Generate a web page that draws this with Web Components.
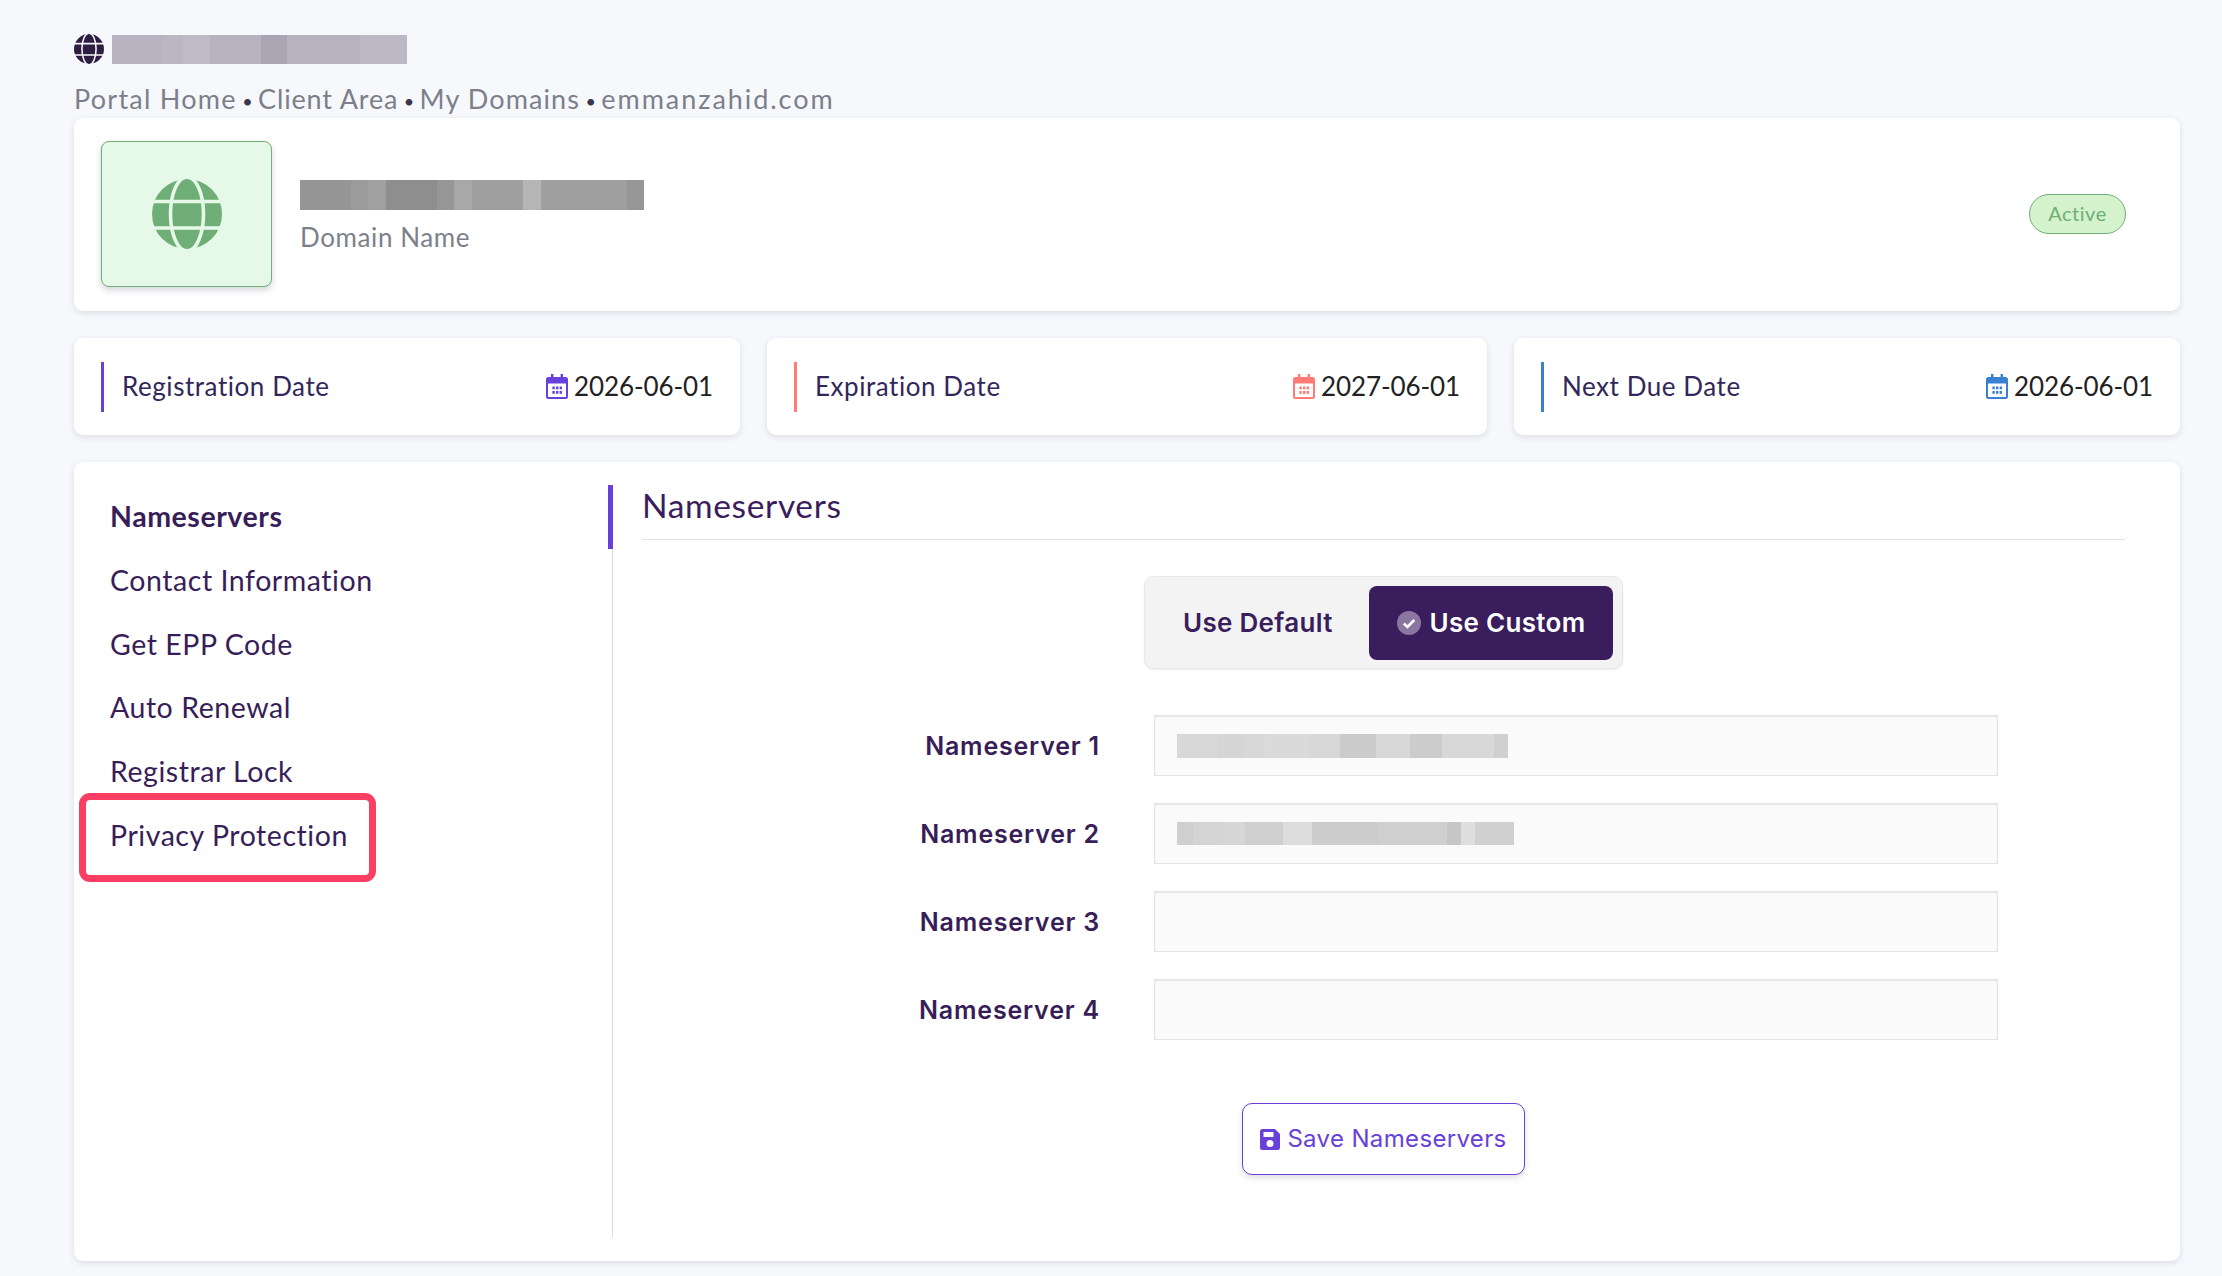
<!DOCTYPE html>
<html>
<head>
<meta charset="utf-8">
<title>Nameservers</title>
<style>
  html, body { margin: 0; height: 1276px; overflow: hidden; background: #f7f8fc; }
  body { font-family: "Lato", "Liberation Sans", sans-serif; }
</style>
</head>
<body>
<domain-page></domain-page>

<script>
const SANS = `"Lato", "Liberation Sans", sans-serif`;
const BOLD = `"Inter", "Liberation Sans", sans-serif`;

class BlurBar extends HTMLElement {
  connectedCallback() {
    const root = this.attachShadow({ mode: "open" });
    const segs = this.getAttribute("segs").split(",").map((s) => {
      const [w, c] = s.trim().split(" ");
      return `<i style="flex:${w} 0 0;background:#${c}"></i>`;
    }).join("");
    root.innerHTML = `
      <style>
        :host { display: flex; width: ${this.getAttribute("w")}px; height: ${this.getAttribute("h")}px; }
      </style>
      ${segs}
    `;
  }
}
customElements.define("blur-bar", BlurBar);

class GlobeIcon extends HTMLElement {
  connectedCallback() {
    const root = this.attachShadow({ mode: "open" });
    const size = this.getAttribute("size");
    root.innerHTML = `
      <style>
        :host { display: block; width: ${size}px; height: ${size}px; }
        svg { display: block; width: 100%; height: 100%; }
      </style>
      <svg viewBox="0 0 70 70">
        <circle cx="35" cy="35" r="35" fill="${this.getAttribute("fill")}"/>
        <g fill="none" stroke="${this.getAttribute("gap")}" stroke-width="3.600">
          <ellipse cx="35" cy="35" rx="16.500" ry="37"/>
          <path d="M0 22.500H70M0 49H70"/>
        </g>
      </svg>
    `;
  }
}
customElements.define("globe-icon", GlobeIcon);

class CalIcon extends HTMLElement {
  connectedCallback() {
    const root = this.attachShadow({ mode: "open" });
    let dots = "";
    for (const y of [12.5, 17]) {
      for (const x of [6.4, 10, 13.6]) {
        dots += `<rect x="${x}" y="${y}" width="2.4" height="2.8"/>`;
      }
    }
    root.innerHTML = `
      <style>
        :host { display: block; width: 22px; height: 25px; color: var(--accent); }
        svg { display: block; }
      </style>
      <svg width="22" height="25" viewBox="0 0 22 25" fill="currentColor">
        <path d="M5 0h2.400v3h7.200V0H17v3h2.500A2.500 2.500 0 0 1 22 5.500V22.500A2.500 2.500 0 0 1 19.500 25H2.500A2.500 2.500 0 0 1 0 22.500V5.500A2.500 2.500 0 0 1 2.500 3H5z"/>
        <rect x="2" y="9.500" width="18" height="13.500" rx=".5" fill="#fff"/>
        ${dots}
      </svg>
    `;
  }
}
customElements.define("cal-icon", CalIcon);

class DomainCard extends HTMLElement {
  connectedCallback() {
    const root = this.attachShadow({ mode: "open" });
    root.innerHTML = `
      <style>
        :host {
          display: flex; align-items: center; box-sizing: border-box; height: 193px;
          padding: 0 54px 1px 27px; background: #fff; border-radius: 9px;
          box-shadow: 0 2px 6px rgba(60, 60, 90, .14);
        }
        .thumb {
          display: flex; align-items: center; justify-content: center; box-sizing: border-box;
          width: 171px; height: 146px; margin-right: 28px; background: #e6f9e8;
          border: 1px solid #6fae76; border-radius: 8px;
          box-shadow: 0 3px 6px rgba(60, 60, 90, .22);
        }
        .info { flex: 1; padding-top: 6px; }
        .caption { margin-top: 10px; font: 26px/34px ${SANS}; color: #7d7f8b; letter-spacing: .6px; }
        .status {
          box-sizing: border-box; width: 97px; height: 40px; text-align: center;
          font: 20px/36px ${SANS}; color: #6fae76; letter-spacing: .5px;
          background: #d4f2cc; border: 1px solid #6fae76; border-radius: 20px;
        }
      </style>
      <div class="thumb"><globe-icon size="70" fill="#6fae76" gap="#e6f9e8"></globe-icon></div>
      <div class="info">
        <blur-bar w="344" h="30" segs="100 959595,33 9b9b9b,36 a0a0a0,100 8e8e8e,33 969696,35 a8a8a8,100 9f9f9f,35 b5b5b5,169 9f9f9f,33 969696"></blur-bar>
        <div class="caption">Domain Name</div>
      </div>
      <div class="status">Active</div>
    `;
  }
}
customElements.define("domain-card", DomainCard);

class DateCard extends HTMLElement {
  connectedCallback() {
    const root = this.attachShadow({ mode: "open" });
    root.innerHTML = `
      <style>
        :host {
          display: flex; align-items: center; box-sizing: border-box; height: 97px;
          padding: 0 27px 0 27px; background: #fff; border-radius: 9px;
          box-shadow: 0 2px 6px rgba(60, 60, 90, .14);
          flex: 0 0 ${this.getAttribute("w")}px;
        }
        .tick { width: 3px; height: 50px; margin-right: 18px; background: var(--accent); }
        .label { flex: 1; margin-top: -2px; font: 26px/34px ${SANS}; color: #33265a; letter-spacing: .55px; }
        .date { margin: -2px 0 0 6px; font: 26px/34px ${SANS}; color: #222; letter-spacing: -.1px; }
      </style>
      <div class="tick"></div>
      <div class="label">${this.getAttribute("label")}</div>
      <cal-icon></cal-icon>
      <div class="date">${this.getAttribute("date")}</div>
    `;
    this.style.setProperty("--accent", this.getAttribute("accent"));
  }
}
customElements.define("date-card", DateCard);

class NavItem extends HTMLElement {
  connectedCallback() {
    const root = this.attachShadow({ mode: "open" });
    root.innerHTML = `
      <style>
        :host {
          display: block; position: relative; box-sizing: border-box; height: 63.800px; margin-right: -1px;
          padding-left: 36px; font: 28.500px/62px ${SANS}; color: #381e58; letter-spacing: .55px;
        }
        :host([active]) { font-weight: 700; border-right: 5px solid #6741d9; }
        :host([marked])::after {
          content: ""; position: absolute; left: 5px; top: -11px; width: 297px; height: 89px;
          box-sizing: border-box; border: 7px solid #fb3e64; border-radius: 11px;
        }
      </style>
      <slot></slot>
    `;
  }
}
customElements.define("nav-item", NavItem);

class SideNav extends HTMLElement {
  connectedCallback() {
    const root = this.attachShadow({ mode: "open" });
    root.innerHTML = `
      <style>
        :host { display: block; box-sizing: border-box; width: 539px; border-right: 1px solid #dcdcdf; }
      </style>
      <slot></slot>
    `;
  }
}
customElements.define("side-nav", SideNav);

class NsToggle extends HTMLElement {
  connectedCallback() {
    const root = this.attachShadow({ mode: "open" });
    root.innerHTML = `
      <style>
        :host {
          display: flex; align-items: center; box-sizing: border-box; width: 479px; height: 93px;
          padding: 0 9px 0 38px; background: #f3f3f4; border: 1px solid #e8e8ea; border-radius: 10px;
          box-shadow: 0 1px 2px rgba(0, 0, 0, .08);
          font: 600 26px/34px ${BOLD}; color: #3a1d5c; letter-spacing: .3px;
        }
        .off { flex: 1; }
        .on {
          display: flex; align-items: center; justify-content: center; gap: 9px;
          width: 244px; height: 74px; color: #fff; background: #3a1d5c; border-radius: 8px;
        }
        svg { display: block; }
      </style>
      <div class="off">Use Default</div>
      <div class="on">
        <svg width="24" height="24" viewBox="0 0 24 24">
          <circle cx="12" cy="12" r="12" fill="#8a76a0"/>
          <path d="M6.800 12.500l3.600 3.500 6.900-7" fill="none" stroke="#fff" stroke-width="2.600"/>
        </svg>
        <span>Use Custom</span>
      </div>
    `;
  }
}
customElements.define("ns-toggle", NsToggle);

class NsField extends HTMLElement {
  connectedCallback() {
    const root = this.attachShadow({ mode: "open" });
    root.innerHTML = `
      <style>
        :host { display: flex; align-items: center; gap: 54px; height: 61px; }
        .label { width: 458px; text-align: right; font: 600 25px/34px ${BOLD}; color: #381e58; letter-spacing: .8px; }
        .input {
          display: flex; align-items: center; box-sizing: border-box; width: 844px; height: 61px;
          padding-left: 22px; background: #fafafa; border: 1px solid #e4e4e6;
          box-shadow: inset 0 1px 2px rgba(0, 0, 0, .07);
        }
      </style>
      <div class="label">${this.getAttribute("label")}</div>
      <div class="input"><slot></slot></div>
    `;
  }
}
customElements.define("ns-field", NsField);

class SaveButton extends HTMLElement {
  connectedCallback() {
    const root = this.attachShadow({ mode: "open" });
    root.innerHTML = `
      <style>
        :host {
          display: flex; align-items: center; justify-content: center; gap: 7px; box-sizing: border-box;
          width: 283px; height: 72px; background: #fff; border: 1.500px solid #6741d9; border-radius: 10px;
          box-shadow: 0 3px 6px rgba(60, 60, 90, .16);
          font: 400 24px/30px ${BOLD}; color: #6741d9; letter-spacing: .35px;
        }
        svg { display: block; }
      </style>
      <svg width="20" height="21" viewBox="0 0 20 21">
        <path fill="#6741d9" fill-rule="evenodd" d="M2.500 0H15l5 5v13.500a2.500 2.500 0 0 1-2.500 2.500h-15A2.500 2.500 0 0 1 0 18.500v-16A2.500 2.500 0 0 1 2.500 0zM3.500 3v5h10V3zM10 11a3.500 3.500 0 1 0 0 7 3.500 3.500 0 0 0 0-7z"/>
      </svg>
      <span><slot></slot></span>
    `;
  }
}
customElements.define("save-button", SaveButton);

class NsPane extends HTMLElement {
  connectedCallback() {
    const root = this.attachShadow({ mode: "open" });
    root.innerHTML = `
      <style>
        :host { display: block; flex: 1; padding-left: 29px; }
        h2 {
          box-sizing: border-box; height: 55px; margin: 0; border-bottom: 1px solid #e2e2e5;
          font: 400 33.500px/32px ${SANS}; padding-top: 4px; color: #3a1d5c; letter-spacing: .65px;
        }
        .center { display: flex; justify-content: center; }
        .toggle { margin-top: 36px; }
        .fields { display: flex; flex-direction: column; gap: 27px; margin-top: 46px; }
        .save { margin-top: 63px; }
      </style>
      <h2>Nameservers</h2>
      <div class="center toggle"><ns-toggle></ns-toggle></div>
      <div class="fields"><slot></slot></div>
      <div class="center save"><save-button>Save Nameservers</save-button></div>
    `;
  }
}
customElements.define("ns-pane", NsPane);

class DomainPage extends HTMLElement {
  connectedCallback() {
    const root = this.attachShadow({ mode: "open" });
    root.innerHTML = `
      <style>
        :host { display: block; box-sizing: border-box; height: 1276px; padding: 34px 42px 0 74px; }
        .brand { display: flex; align-items: center; gap: 8px; height: 30px; }
        .crumbs {
          height: 54px; font: 27px/30px ${SANS}; padding-top: 20px; box-sizing: border-box;
          color: #7c7f8b; white-space: nowrap;
        }
        .crumbs b { margin: 0 -1.500px; font-weight: 400; font-size: 18px; color: #3a3550; vertical-align: 1px; }
        .dates { display: flex; gap: 27px; margin-top: 27px; }
        .main {
          display: flex; box-sizing: border-box; height: 799px; margin-top: 27px; padding: 23px 55px 24px 0;
          background: #fff; border-radius: 9px; box-shadow: 0 2px 6px rgba(60, 60, 90, .14);
        }
      </style>
      <div class="brand">
        <globe-icon size="30" fill="#2e1d40" gap="#f7f8fc"></globe-icon>
        <blur-bar w="295" h="29" segs="100 b7b3c0,40 bab6c2,53 bebac6,100 b6b2be,51 a9a5b3,143 b6b3bf,92 bcb9c4"></blur-bar>
      </div>
      <div class="crumbs"><span style="letter-spacing:1.25px">Portal Home</span> <b>•</b> <span style="letter-spacing:.85px">Client Area</span> <b>•</b> <span style="letter-spacing:1.1px">My Domains</span> <b>•</b> <span style="letter-spacing:1.95px">emmanzahid.com</span></div>
      <domain-card></domain-card>
      <div class="dates">
        <date-card w="666" accent="#6741d9" label="Registration Date" date="2026-06-01"></date-card>
        <date-card w="720" accent="#ff7b74" label="Expiration Date" date="2027-06-01"></date-card>
        <date-card w="666" accent="#3a80d0" label="Next Due Date" date="2026-06-01"></date-card>
      </div>
      <div class="main">
        <side-nav>
          <nav-item active>Nameservers</nav-item>
          <nav-item>Contact Information</nav-item>
          <nav-item>Get EPP Code</nav-item>
          <nav-item>Auto Renewal</nav-item>
          <nav-item>Registrar Lock</nav-item>
          <nav-item marked>Privacy Protection</nav-item>
        </side-nav>
        <ns-pane>
          <ns-field label="Nameserver 1"><blur-bar w="331" h="24" segs="89 d8d8d8,60 d5d5d5,47 d8d8d8,100 dadada,68 d8d8d8,81 cbcbcb,76 d8d8d8,72 cccccc,116 d8d8d8,32 d0d0d0"></blur-bar></ns-field>
          <ns-field label="Nameserver 2"><blur-bar w="337" h="23" segs="36 cfcfcf,67 d4d4d4,50 d6d6d6,85 cfcfcf,65 dcdcdc,150 cccccc,152 cfcfcf,31 c6c6c6,32 dedede,87 d0d0d0"></blur-bar></ns-field>
          <ns-field label="Nameserver 3"></ns-field>
          <ns-field label="Nameserver 4"></ns-field>
        </ns-pane>
      </div>
    `;
  }
}
customElements.define("domain-page", DomainPage);
</script>
</body>
</html>
